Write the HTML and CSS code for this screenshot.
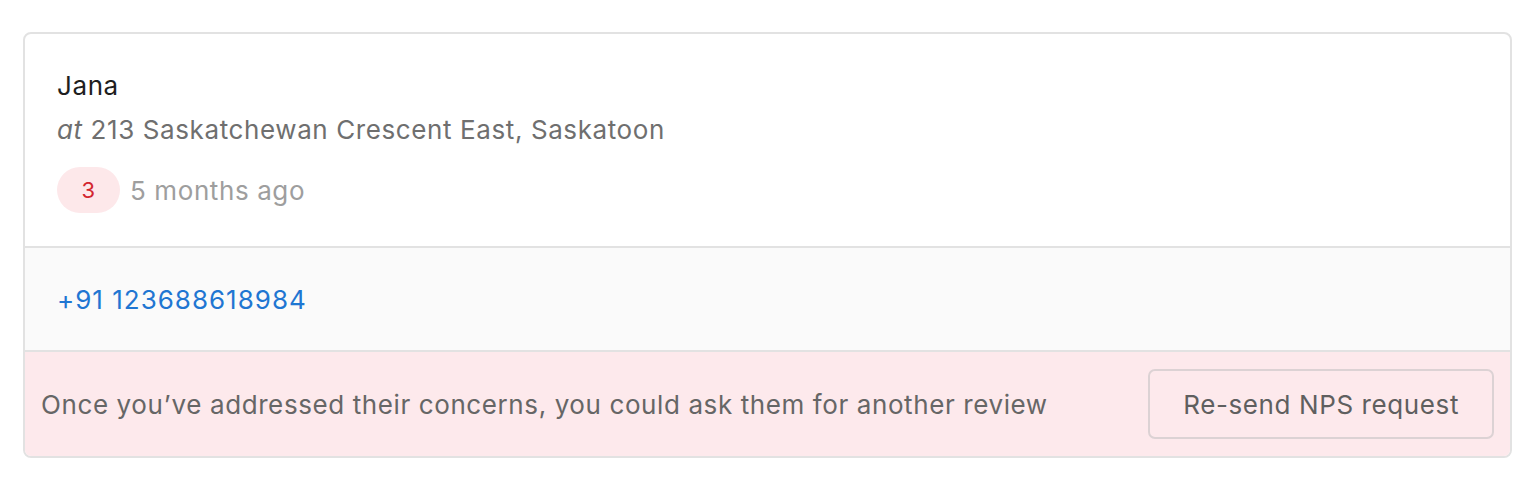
FILE: index.html
```html
<!DOCTYPE html>
<html>
<head>
<meta charset="utf-8">
<link rel="stylesheet" href="styles.css">
</head>
<body>
<div class="card">
  <div class="head">
    <div class="name">Jana</div>
    <div class="addr"><em>at</em> 213 Saskatchewan Crescent East, Saskatoon</div>
    <div class="meta">
      <span class="score">3</span>
      <span class="ago">5 months ago</span>
    </div>
  </div>
  <div class="phone"><a href="#">+91 123688618984</a></div>
  <div class="foot">
    <span class="msg">Once you’ve addressed their concerns, you could ask them for another review</span>
    <button class="btn">Re-send NPS request</button>
  </div>
</div>
</body>
</html>
```
FILE: styles.css
```css
html, body { margin: 0; padding: 0; background: #fff; }
body {
  font-family: Inter, "Noto Sans", sans-serif;
  padding: 32px 26px 0 23px;
  letter-spacing: 0.6px;
}
.card {
  border: 2px solid #e2e2e2;
  border-radius: 8px;
  overflow: hidden;
}
.head {
  padding: 34px 32px 33px;
}
.name {
  font-size: 26px;
  line-height: 36px;
  color: #1e1e1e;
}
.addr {
  margin-top: 8px;
  font-size: 26px;
  line-height: 36px;
  color: #6f6f6f;
}
.meta {
  margin-top: 19px;
  display: flex;
  align-items: center;
  gap: 10px;
}
.score {
  display: inline-flex;
  align-items: center;
  justify-content: center;
  width: 63px;
  height: 46px;
  border-radius: 23px;
  background: #fde8ea;
  color: #d3262f;
  font-size: 22px;
}
.ago {
  font-size: 26px;
  color: #9e9e9e;
}
.phone {
  border-top: 2px solid #e2e2e2;
  background: #fafafa;
  height: 102px;
  display: flex;
  align-items: center;
  padding: 0 32px;
}
.phone a {
  color: #1f76d2;
  text-decoration: none;
  font-size: 26px;
  letter-spacing: 1px;
}
.foot {
  border-top: 2px solid #e2e2e2;
  background: #fde9ec;
  display: flex;
  align-items: center;
  justify-content: space-between;
  padding: 17px 16px 17px;
}
.msg {
  font-size: 26px;
  color: #666;
}
.btn {
  font-family: inherit;
  letter-spacing: inherit;
  font-size: 26px;
  color: #5f5f5f;
  background: transparent;
  border: 2px solid #dcd2d4;
  border-radius: 7px;
  height: 70px;
  padding: 0 33px;
}
```
